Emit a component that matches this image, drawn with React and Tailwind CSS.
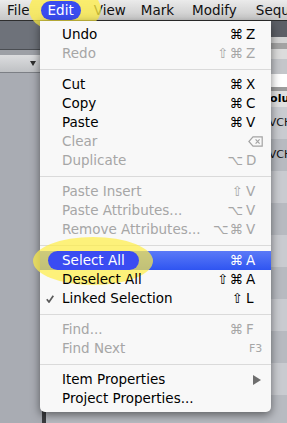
import React from "react";

const FONT = { fontFamily: '"DejaVu Sans", "Liberation Sans", sans-serif' };

const menuItems = [
  { label: "Undo", mods: "⌘", key: "Z" },
  { label: "Redo", mods: "⇧⌘", key: "Z", disabled: true },
  "sep",
  { label: "Cut", mods: "⌘", key: "X" },
  { label: "Copy", mods: "⌘", key: "C" },
  { label: "Paste", mods: "⌘", key: "V" },
  { label: "Clear", key: "del", disabled: true },
  { label: "Duplicate", mods: "⌥", key: "D", disabled: true },
  "sep",
  { label: "Paste Insert", mods: "⇧", key: "V", disabled: true },
  { label: "Paste Attributes...", mods: "⌥", key: "V", disabled: true },
  { label: "Remove Attributes...", mods: "⌥⌘", key: "V", disabled: true },
  "sep",
  { label: "Select All", mods: "⌘", key: "A", active: true },
  { label: "Deselect All", mods: "⇧⌘", key: "A" },
  { label: "Linked Selection", mods: "⇧", key: "L", checked: true },
  "sep",
  { label: "Find...", mods: "⌘", key: "F", disabled: true },
  { label: "Find Next", key: "F3", disabled: true },
  "sep",
  { label: "Item Properties", submenu: true },
  { label: "Project Properties..." },
];

function DeleteIcon() {
  return (
    <svg width="15" height="11" viewBox="0 0 15 11" fill="none" stroke="#a3a3a3" strokeWidth="1.2">
      <path d="M5 0.8H14.2V10.2H5L0.9 5.5Z" />
      <path d="M7.6 3.4L11.6 7.6M11.6 3.4L7.6 7.6" />
    </svg>
  );
}

function Shortcut({ item }) {
  if (item.submenu) {
    return (
      <span className="w-[16px] flex justify-end pr-[1px]">
        <svg width="8" height="10" viewBox="0 0 8 10">
          <path d="M0 0L8 5L0 10Z" fill="#6e6e6e" />
        </svg>
      </span>
    );
  }
  if (!item.key) return null;
  const color = item.active ? "text-white" : item.disabled ? "text-[#a6a6a6]" : "text-black";
  return (
    <span className={`flex items-center ${color}`}>
      {item.mods && <span className="mr-[2px] tracking-[1px]">{item.mods}</span>}
      <span className="w-[16px] flex items-center">
        {item.key === "del" ? (
          <span className="ml-[2px]">
            <DeleteIcon />
          </span>
        ) : item.key === "F3" ? (
          <span className="text-[11px] ml-[3px]">F3</span>
        ) : (
          item.key
        )}
      </span>
    </span>
  );
}

function MenuRow({ item }) {
  const textColor = item.active ? "text-white" : item.disabled ? "text-[#a6a6a6]" : "text-black";
  return (
    <div
      className={`relative h-[19px] flex items-center justify-between pl-[22px] pr-[9px] ${
        item.active ? "bg-gradient-to-b from-[#5b79f7] to-[#2f54f1]" : ""
      }`}
    >
      {item.active && (
        <span className="absolute left-[8px] top-0 h-[19px] w-[91px] rounded-full bg-[#3a4cf2] z-[15]" />
      )}
      {item.checked && (
        <svg className="absolute left-[6px] top-[6px]" width="8" height="8" viewBox="0 0 8 8">
          <path d="M0.8 4.3L3 7L7.3 0.8" fill="none" stroke="#5a5a5a" strokeWidth="1.7" />
        </svg>
      )}
      <span className={`relative z-[16] ${textColor}`}>{item.label}</span>
      <Shortcut item={item} />
    </div>
  );
}

export default function App() {
  return (
    <div
      className="relative w-[287px] h-[423px] overflow-hidden bg-[#a9acb3] text-[13.5px] leading-[19px]"
      style={FONT}
    >
      {/* marker around Edit */}
      <div className="absolute left-[29px] top-[-14px] w-[72px] h-[47px] rounded-[50%] bg-[#ffee44]/75 z-[5]" />

      {/* menu bar */}
      <div className="relative h-[21px] flex items-center bg-gradient-to-b from-[#ebebeb] to-[#c7c7c7] border-b border-[#2e2e2e] text-[#111] whitespace-nowrap">
        <span className="ml-[7px]">File</span>
        <span className="relative z-[6] ml-[11px] h-[19px] px-[7px] rounded-full bg-[#3a4cef] text-white flex items-center">
          Edit
        </span>
        <span className="ml-[13px]">View</span>
        <span className="ml-[15px]">Mark</span>
        <span className="ml-[18px]">Modify</span>
        <span className="ml-[19px]">Sequence</span>
      </div>

      {/* app behind */}
      <div className="flex h-[402px]">
        <div className="w-[42px] shrink-0 flex flex-col">
          <div className="h-[28px] bg-[#6e727a]" />
          <div className="h-px bg-[#4b4e53]" />
          <div className="h-[5px] bg-[#9da0a6]" />
          <div className="h-[17px] bg-gradient-to-b from-[#dcdddf] to-[#bfc1c4] flex items-center justify-end pr-[6px]">
            <svg width="6" height="5" viewBox="0 0 6 5">
              <path d="M0 0H6L3 5Z" fill="#2f2f2f" />
            </svg>
          </div>
          <div className="h-px bg-[#7c7f85]" />
          <div className="flex-1 bg-[#a9acb3]" />
        </div>
        <div className="flex-1 min-w-0 overflow-hidden flex flex-col border-l-[4px] border-[#3a3b3e] bg-[#b8bbc1]">
          <div className="h-[16px] bg-[#5c5f66]" />
          <div className="h-[6px] bg-[#d3d3d3]" />
          <div className="h-[6px] bg-[#a3a3a3]" />
          <div className="h-[10px] bg-[#dcdcdc]" />
          <div className="h-[15px] bg-[#c4c6ca]" />
          <div className="h-[13px] bg-white" />
          <div className="h-[4px] bg-[#9c9c9c]" />
          <div className="h-[16px] bg-[#e0e0e0] grid grid-cols-[26px_133px_52px_1fr] text-[11px] font-bold leading-[16px]">
            <span className="border-r border-[#9a9a9a]" />
            <span className="border-r border-[#9a9a9a]" />
            <span className="border-r border-[#9a9a9a]" />
            <span className="pl-[5px] whitespace-nowrap overflow-hidden">Column</span>
          </div>
          {[0, 1, 2, 3, 4, 5, 6, 7, 8].map((i) => (
            <div
              key={i}
              className={`h-[32px] grid grid-cols-[26px_133px_52px_1fr] text-[11px] leading-[32px] ${
                i % 2 === 0 ? "bg-[#c9cbd0]" : "bg-[#b7bac0]"
              }`}
            >
              <span className="border-r border-[#7d7f84]" />
              <span className="border-r border-[#7d7f84]" />
              <span className="border-r border-[#7d7f84]" />
              <span className="pl-[5px] whitespace-nowrap overflow-hidden text-[#111]">
                {i < 2 ? "AVCHD" : ""}
              </span>
            </div>
          ))}
        </div>
      </div>

      {/* Edit menu */}
      <div className="absolute left-[40px] top-[21px] w-[231px] z-20 bg-[#f8f8f8] rounded-b-[5px] pt-[4px] pb-[4px] shadow-[0_3px_10px_rgba(0,0,0,0.5)]">
        {/* marker around Select All */}
        <div className="absolute left-[-7px] top-[216px] w-[120px] h-[48px] rounded-[50%] bg-[#ffee44]/70 z-10" />
        {menuItems.map((item, i) =>
          item === "sep" ? (
            <div key={i} className="h-[12px] flex items-center">
              <div className="h-px w-full bg-[#dadada]" />
            </div>
          ) : (
            <MenuRow key={i} item={item} />
          )
        )}
      </div>
    </div>
  );
}
